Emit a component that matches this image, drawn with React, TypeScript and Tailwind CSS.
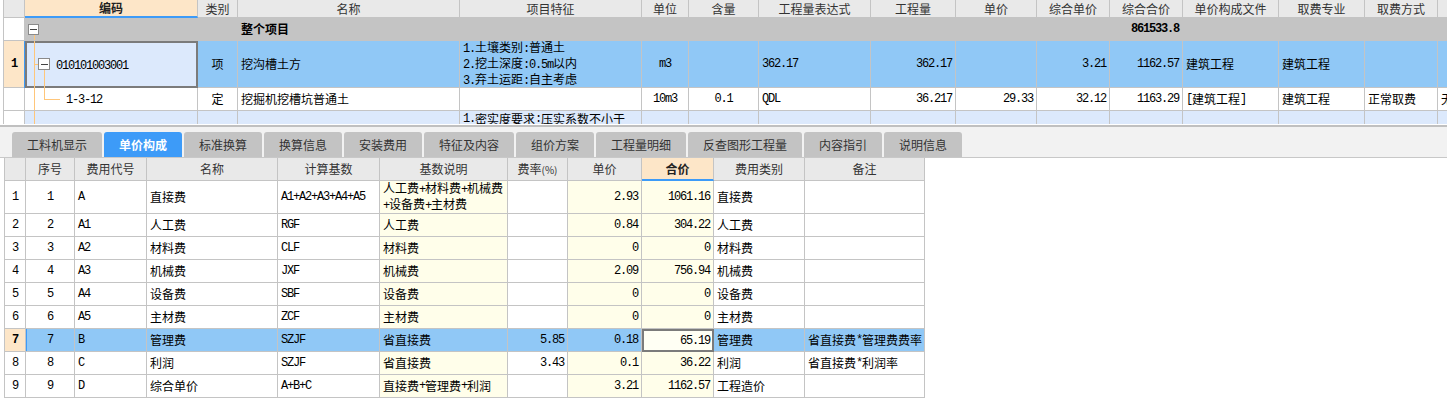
import React from "react";

const MONO = "font-['Liberation_Mono',monospace] tracking-[-1.2px]";

function T({ s }: { s: string }) {
  const parts = s.split(/([\x00-\x7f]+)/).filter((p) => p !== "");
  return (
    <>
      {parts.map((p, i) =>
        /^[\x00-\x7f]+$/.test(p) ? (
          <span key={i} className={MONO}>
            {p}
          </span>
        ) : (
          <span key={i}>{p}</span>
        )
      )}
    </>
  );
}

const topCols = [
  "w-[21px]",
  "w-[173px]",
  "w-[40px]",
  "w-[222px]",
  "w-[182px]",
  "w-[47px]",
  "w-[70px]",
  "w-[112px]",
  "w-[85px]",
  "w-[81px]",
  "w-[73px]",
  "w-[73px]",
  "w-[96px]",
  "w-[86px]",
  "w-[73px]",
  "w-[60px]",
];

const topHeaders = [
  "",
  "编码",
  "类别",
  "名称",
  "项目特征",
  "单位",
  "含量",
  "工程量表达式",
  "工程量",
  "单价",
  "综合单价",
  "综合合价",
  "单价构成文件",
  "取费专业",
  "取费方式",
  "",
];

const cellBase =
  "shrink-0 flex items-center border-r border-b border-[#c4c4c4] overflow-hidden whitespace-nowrap px-[3px]";

function MinusBox({ className }: { className: string }) {
  return (
    <div className={"absolute border border-[#8a8a8a] bg-white flex items-center justify-center " + className}>
      <div className="w-[7px] h-[1px] bg-[#444]" />
    </div>
  );
}

function TopGrid() {
  return (
    <div className="h-[124px] overflow-hidden pl-[3px] bg-white">
      <div className="border-l border-[#c4c4c4] w-[1500px]">
        {/* header */}
        <div className="flex h-[18px] bg-[#e9e9e9] text-[#333]">
          {topHeaders.map((h, i) => (
            <div
              key={i}
              className={
                cellBase +
                " justify-center " +
                topCols[i] +
                (i === 1 ? " bg-[#fde6c8] font-bold text-[#222] border-b-2 border-b-[#3d9bf8]" : "")
              }
            >
              {h}
            </div>
          ))}
        </div>
        {/* 整个项目 row */}
        <div className="flex h-[23px] bg-[#c4c4c4]">
          <div className={cellBase + " bg-white " + topCols[0]} />
          <div className={cellBase + " relative " + topCols[1]}>
            <MinusBox className="left-[3px] top-[6px] w-[11px] h-[11px]" />
            <div className="absolute left-[9px] top-[17px] bottom-0 w-[1px] bg-[#ffc67a]" />
          </div>
          <div className={cellBase + " " + topCols[2]} />
          <div className={cellBase + " font-bold " + topCols[3]}>整个项目</div>
          {[4, 5, 6, 7, 8, 9, 10].map((i) => (
            <div key={i} className={cellBase + " " + topCols[i]} />
          ))}
          <div className={cellBase + " justify-end font-bold " + topCols[11]}>
            <T s="861533.8" />
          </div>
          {[12, 13, 14, 15].map((i) => (
            <div key={i} className={cellBase + " " + topCols[i]} />
          ))}
        </div>
        {/* row 1 */}
        <div className="flex h-[47px] bg-[#90c8f6]">
          <div className={cellBase + " justify-center bg-[#fde6c8] font-bold " + topCols[0]}>
            <T s="1" />
          </div>
          <div
            className={
              "shrink-0 relative flex items-center border-2 border-[#7b7b7b] bg-[#dce9fc] shadow-[-1px_0_0_#3d9bf8] " +
              topCols[1]
            }
          >
            <div className="absolute left-[7px] top-[-2px] bottom-[-2px] w-[1px] bg-[#ffc67a]" />
            <div className="absolute left-[7px] top-[21px] w-[5px] h-[1px] bg-[#ffc67a]" />
            <MinusBox className="left-[11px] top-[15px] w-[12px] h-[12px]" />
            <div className="absolute left-[17px] top-[27px] bottom-[-2px] w-[1px] bg-[#ffc67a]" />
            <div className="pl-[29px]">
              <T s="010101003001" />
            </div>
          </div>
          <div className={cellBase + " justify-center " + topCols[2]}>项</div>
          <div className={cellBase + " " + topCols[3]}>挖沟槽土方</div>
          <div className={cellBase + " " + topCols[4]}>
            <div className="leading-[13px]">
              <div>
                <T s="1.土壤类别:普通土" />
              </div>
              <div>
                <T s="2.挖土深度:0.5m以内" />
              </div>
              <div>
                <T s="3.弃土运距:自主考虑" />
              </div>
            </div>
          </div>
          <div className={cellBase + " justify-center " + topCols[5]}>
            <T s="m3" />
          </div>
          <div className={cellBase + " " + topCols[6]} />
          <div className={cellBase + " " + topCols[7]}>
            <T s="362.17" />
          </div>
          <div className={cellBase + " justify-end " + topCols[8]}>
            <T s="362.17" />
          </div>
          <div className={cellBase + " " + topCols[9]} />
          <div className={cellBase + " justify-end " + topCols[10]}>
            <T s="3.21" />
          </div>
          <div className={cellBase + " justify-end " + topCols[11]}>
            <T s="1162.57" />
          </div>
          <div className={cellBase + " " + topCols[12]}>建筑工程</div>
          <div className={cellBase + " " + topCols[13]}>建筑工程</div>
          <div className={cellBase + " " + topCols[14]} />
          <div className={cellBase + " " + topCols[15]} />
        </div>
        {/* row 1-3-12 */}
        <div className="flex h-[23px] bg-white">
          <div className={cellBase + " " + topCols[0]} />
          <div className={cellBase + " relative " + topCols[1]}>
            <div className="absolute left-[9px] top-0 bottom-0 w-[1px] bg-[#ffc67a]" />
            <div className="absolute left-[19px] top-0 h-[11px] w-[1px] bg-[#ffc67a]" />
            <div className="absolute left-[19px] top-[11px] w-[16px] h-[1px] bg-[#ffc67a]" />
            <div className="pl-[38px]">
              <T s="1-3-12" />
            </div>
          </div>
          <div className={cellBase + " justify-center " + topCols[2]}>定</div>
          <div className={cellBase + " " + topCols[3]}>挖掘机挖槽坑普通土</div>
          <div className={cellBase + " " + topCols[4]} />
          <div className={cellBase + " justify-center " + topCols[5]}>
            <T s="10m3" />
          </div>
          <div className={cellBase + " justify-center " + topCols[6]}>
            <T s="0.1" />
          </div>
          <div className={cellBase + " " + topCols[7]}>
            <T s="QDL" />
          </div>
          <div className={cellBase + " justify-end " + topCols[8]}>
            <T s="36.217" />
          </div>
          <div className={cellBase + " justify-end " + topCols[9]}>
            <T s="29.33" />
          </div>
          <div className={cellBase + " justify-end " + topCols[10]}>
            <T s="32.12" />
          </div>
          <div className={cellBase + " justify-end " + topCols[11]}>
            <T s="1163.29" />
          </div>
          <div className={cellBase + " " + topCols[12]}>
            <T s="[" />
            建筑工程
            <T s="]" />
          </div>
          <div className={cellBase + " " + topCols[13]}>建筑工程</div>
          <div className={cellBase + " " + topCols[14]}>正常取费</div>
          <div className={cellBase + " " + topCols[15]}>无</div>
        </div>
        {/* partial row */}
        <div className="flex h-[23px] bg-[#dce9fc]">
          <div className={cellBase + " bg-white " + topCols[0]} />
          <div className={cellBase + " relative " + topCols[1]}>
            <div className="absolute left-[9px] top-0 bottom-0 w-[1px] bg-[#ffc67a]" />
          </div>
          {[2, 3].map((i) => (
            <div key={i} className={cellBase + " " + topCols[i]} />
          ))}
          <div className={cellBase + " items-start pt-[1px] " + topCols[4]}>
            <T s="1.密实度要求:压实系数不小于" />
          </div>
          {[5, 6, 7, 8, 9, 10, 11, 12, 13, 14, 15].map((i) => (
            <div key={i} className={cellBase + " " + topCols[i]} />
          ))}
        </div>
      </div>
    </div>
  );
}

const tabs: [string, string][] = [
  ["工料机显示", "w-[90px]"],
  ["单价构成", "w-[78px]"],
  ["标准换算", "w-[78px]"],
  ["换算信息", "w-[78px]"],
  ["安装费用", "w-[78px]"],
  ["特征及内容", "w-[90px]"],
  ["组价方案", "w-[78px]"],
  ["工程量明细", "w-[90px]"],
  ["反查图形工程量", "w-[114px]"],
  ["内容指引", "w-[78px]"],
  ["说明信息", "w-[78px]"],
];

function Tabs() {
  return (
    <div className="h-[30px] bg-[#f2f2f2] flex items-end gap-[2px] pl-[12px] border-b border-[#c8c8c8] box-content">
      {tabs.map(([t, w], i) => (
        <div
          key={i}
          className={
            "h-[25px] rounded-t-[3px] flex items-center justify-center text-[12px] " +
            w +
            (i === 1 ? " bg-[#3d9bf8] text-white font-bold" : " bg-[#c3c3c3] text-[#333]")
          }
        >
          {t}
        </div>
      ))}
    </div>
  );
}

const botCols = [
  "w-[21px]",
  "w-[49px]",
  "w-[72px]",
  "w-[131px]",
  "w-[102px]",
  "w-[128px]",
  "w-[60px]",
  "w-[74px]",
  "w-[72px]",
  "w-[91px]",
  "w-[120px]",
];
const botHeaders = ["", "序号", "费用代号", "名称", "计算基数", "基数说明", "费率(%)", "单价", "合价", "费用类别", "备注"];
const botAlign = [
  " justify-center",
  " justify-center",
  "",
  "",
  "",
  "",
  " justify-end",
  " justify-end",
  " justify-end",
  "",
  "",
];
const cream = [5, 7, 8];

const botRows: string[][] = [
  ["1", "1", "A", "直接费", "A1+A2+A3+A4+A5", "人工费+材料费+机械费\n+设备费+主材费", "", "2.93", "1061.16", "直接费", ""],
  ["2", "2", "A1", "人工费", "RGF", "人工费", "", "0.84", "304.22", "人工费", ""],
  ["3", "3", "A2", "材料费", "CLF", "材料费", "", "0", "0", "材料费", ""],
  ["4", "4", "A3", "机械费", "JXF", "机械费", "", "2.09", "756.94", "机械费", ""],
  ["5", "5", "A4", "设备费", "SBF", "设备费", "", "0", "0", "设备费", ""],
  ["6", "6", "A5", "主材费", "ZCF", "主材费", "", "0", "0", "主材费", ""],
  ["7", "7", "B", "管理费", "SZJF", "省直接费", "5.85", "0.18", "65.19", "管理费", "省直接费*管理费费率"],
  ["8", "8", "C", "利润", "SZJF", "省直接费", "3.43", "0.1", "36.22", "利润", "省直接费*利润率"],
  ["9", "9", "D", "综合单价", "A+B+C", "直接费+管理费+利润", "", "3.21", "1162.57", "工程造价", ""],
];

function BottomTable() {
  return (
    <div className="pl-[4px]">
      <div className="border-l border-[#c4c4c4] w-[920px]">
        <div className="flex h-[23px] bg-[#e9e9e9] text-[#333]">
          {botHeaders.map((h, i) => (
            <div
              key={i}
              className={
                cellBase +
                " justify-center " +
                botCols[i] +
                (i === 8 ? " bg-[#fde6c8] font-bold text-[#222] border-b-2 border-b-[#3d9bf8]" : "")
              }
            >
              {i === 6 ? (
                <span>
                  费率<span className="text-[10px]">(%)</span>
                </span>
              ) : (
                h
              )}
            </div>
          ))}
        </div>
        {botRows.map((r, ri) => {
          const sel = ri === 6;
          return (
            <div key={ri} className={"flex " + (ri === 0 ? "h-[33px]" : "h-[23px]")}>
              {r.map((c, ci) => {
                let bg = cream.includes(ci) ? " bg-[#fffeea]" : " bg-white";
                if (sel) bg = " bg-[#90c8f6]";
                if (sel && ci === 0) bg = " bg-[#fde6c8] font-bold";
                if (sel && ci === 8) {
                  return (
                    <div
                      key={ci}
                      className={
                        "shrink-0 flex items-center justify-end border-2 border-[#7b7b7b] bg-[#fffff4] px-[2px] " +
                        botCols[ci]
                      }
                    >
                      <T s={c} />
                    </div>
                  );
                }
                const lines = c.split("\n");
                return (
                  <div
                    key={ci}
                    className={
                      cellBase +
                      botAlign[ci] +
                      bg +
                      " " +
                      botCols[ci] +
                      (sel && ci === 1 ? " shadow-[inset_1px_0_0_#3d9bf8]" : "")
                    }
                  >
                    {lines.length > 1 ? (
                      <div className="leading-[13px]">
                        {lines.map((l, li) => (
                          <div key={li}>
                            <T s={l} />
                          </div>
                        ))}
                      </div>
                    ) : (
                      <T s={c} />
                    )}
                  </div>
                );
              })}
            </div>
          );
        })}
      </div>
    </div>
  );
}

export default function App() {
  return (
    <div className="w-[1447px] h-[410px] overflow-hidden bg-white text-black text-[12px] leading-[14px] font-['Noto_Sans_CJK_SC','Noto_Sans',sans-serif]">
      <TopGrid />
      <div className="h-[1px] bg-white" />
      <div className="h-[2px] bg-[#c0c0c0]" />
      <Tabs />
      <BottomTable />
    </div>
  );
}
